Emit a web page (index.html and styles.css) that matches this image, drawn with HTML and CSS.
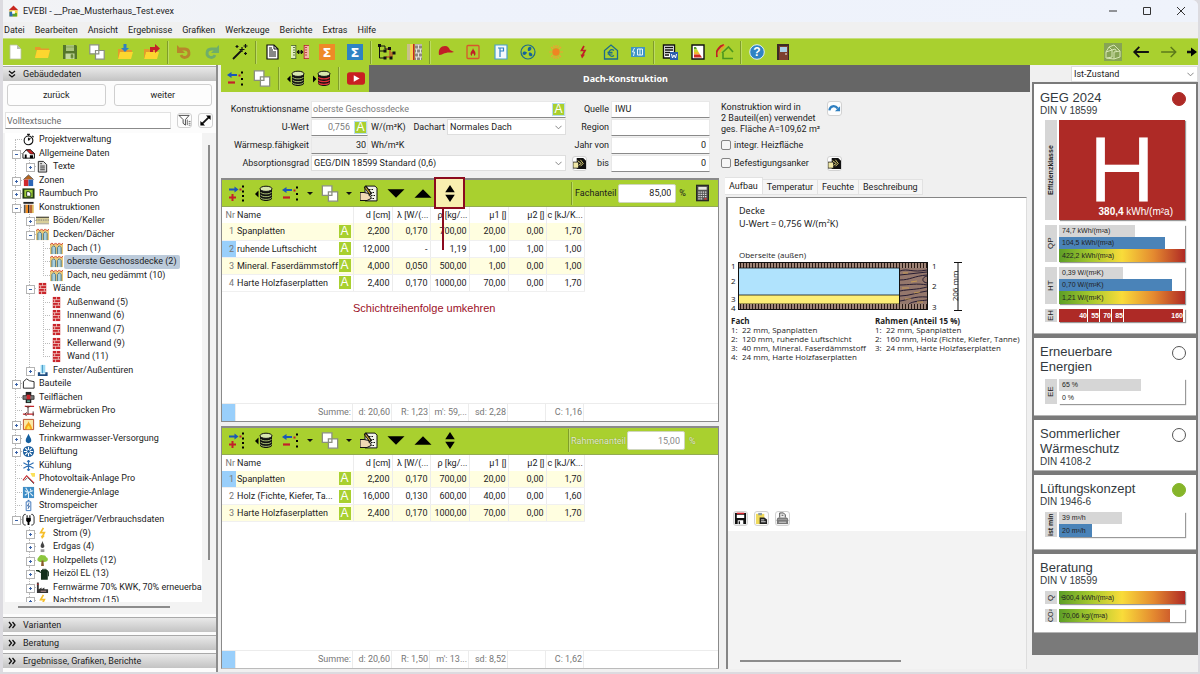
FILE: index.html
```html
<!DOCTYPE html>
<html lang="de">
<head>
<meta charset="utf-8">
<title>EVEBI - __Prae_Musterhaus_Test.evex</title>
<link rel="stylesheet" href="styles.css">
</head>
<body>
<svg class="sprite" aria-hidden="true">
  <defs>
    <pattern id="fibre" width="3" height="6" patternUnits="userSpaceOnUse"><rect width="3" height="6" fill="#a08679"/><path d="M.5 0v6" stroke="#2a1a14" stroke-width="1"/></pattern>
  </defs>
  <symbol id="app" viewBox="0 0 16 16"><path d="M1 7 8 0l7 7z" fill="#c8281e"/><path d="M2 7h12v9H2z" fill="#f3d33c"/><path d="M2 9h5v7H2z" fill="#2d6db0"/><path d="M7 11h6v5H7z" fill="#58a32c"/><path d="M6 8h4v4H6z" fill="#fff"/></symbol>
  <symbol id="new" viewBox="0 0 16 16"><path d="M3 1h7l4 4v10H3z" fill="#fff" stroke="#b9c2a4" stroke-width=".8"/><path d="M10 1v4h4z" fill="#b8bdb0"/></symbol>
  <symbol id="open" viewBox="0 0 16 16"><path d="M1 3h5l1 1.500h8V6H1z" fill="#e59a2c"/><path d="M1 3v10l2-7h13l-2 8H1z" fill="#f0a52f"/><path d="M3 6h13l-2 8H1z" fill="#fcd62f"/></symbol>
  <symbol id="save" viewBox="0 0 16 16"><path d="M1 1h13l1 1v13H1z" fill="#55762a"/><path d="M4 1h8v6H4z" fill="#a9c47a"/><path d="M3.500 9.500h9V15h-9z" fill="#c4d8a0"/><path d="M9 10.500h2V14H9zM4 3h8" fill="#55762a" stroke="#7f9c4c" stroke-width=".8"/></symbol>
  <symbol id="copy" viewBox="0 0 16 16"><path d="M.8.8h9v9h-9zM6.500 6.500h8.700v8.700H6.500z" fill="#fff" stroke="#8a8f80" stroke-width="1.200"/></symbol>
  <symbol id="import" viewBox="0 0 16 16"><path d="M1 5h5l1 1h8v2H1z" fill="#e59a2c"/><path d="M2 8h14l-2 7H1z" fill="#fcd62f"/><path d="M1 5v10l2-7z" fill="#e59a2c"/><path d="M6.500 0h3v4H12L8 8 4 4h2.500z" fill="#2f7fc0"/></symbol>
  <symbol id="export" viewBox="0 0 16 16"><path d="M0 5h5l1 1h7v2H0z" fill="#e59a2c"/><path d="M2 8h13l-2 7H0z" fill="#fcd62f"/><path d="M0 5v10l2-7z" fill="#e59a2c"/><path d="M6 8V3h5V0l5 4.500L11 9V6H9v2z" fill="#c4202a"/></symbol>
  <symbol id="undo" viewBox="0 0 16 16"><path d="M4 5h5a4.200 4.200 0 1 1-4 6" fill="none" stroke="#b8862b" stroke-width="2.800"/><path d="M1 1v8h8z" fill="#b8862b"/></symbol>
  <symbol id="redo" viewBox="0 0 16 16"><path d="M12 5H7a4.200 4.200 0 1 0 4 6" fill="none" stroke="#6fae6a" stroke-width="2.800"/><path d="M15 1v8H7z" fill="#6fae6a"/></symbol>
  <symbol id="wand" viewBox="0 0 16 16"><path d="M1 15 9.500 6.500" stroke="#111" stroke-width="1.800"/><path d="M10 3v5M7.500 5.500h5M5 1v3M3.500 2.500h3M13.500 0v4M11.500 2h4M13.500 8v3M12 9.500h3" stroke="#111" stroke-width="1.200"/></symbol>
  <symbol id="doc" viewBox="0 0 16 16"><path d="M3 1h7l4 4v10H3z" fill="#fff" stroke="#111" stroke-width="1.200"/><path d="M10 1v4h4M5 4h3M5 6h4M5 8h7M5 10h7M5 12h7" fill="none" stroke="#111"/></symbol>
  <symbol id="compare" viewBox="0 0 18 16"><path d="M0 1h5v14H0z" fill="#e4f0c0"/><path d="M0 1.500h5M0 14.500h5M2 3.500h2M2 6h2M2 8.500h2M2 11h2M4.800 1v14" stroke="#3f5a1c" stroke-width=".8"/><path d="M13 1h5v14h-5z" fill="#f2b9a5"/><path d="M13 1.500h5M13 14.500h5M14 3.500h2M14 6h2M14 8.500h2M14 11h2M13.200 1v14" stroke="#b0202a" stroke-width=".8"/><path d="M6 8h6M7.800 6 6 8l1.800 2zM10.200 6 12 8l-1.800 2z" stroke="#111" stroke-width=".9"/></symbol>
  <symbol id="network" viewBox="0 0 18 16"><path d="M1.500 2v12H6M1.500 7H6M3 2h4v3h4" fill="none" stroke="#111"/><path d="M9 5h3v7M8 13h6M14 8v5" fill="none" stroke="#c4202a"/><path d="M0 0h3v3H0zM5.500 5.500h3v3h-3zM10 3h3v3h-3zM5.500 12.500h3v3h-3zM14.500 7.500h3v3h-3zM11.500 12.500h3v3h-3z" fill="#111"/></symbol>
  <symbol id="layers" viewBox="0 0 16 16"><path d="M1 0h3v16H1z" fill="#c8c08c"/><path d="M4 0h3v16H4z" fill="#f6cf4e"/><path d="M7 0h1.500v16H7z" fill="#c4202a"/><path d="M9 0h7v16H9z" fill="#8d8780"/><path d="M9 1h7M9 5h7M9 9h7M9 13h7M12.500 1v4M10.500 5v4M14.500 5v4M12.500 9v4M10.500 13v3M14.500 13v3" stroke="#e6e2da"/></symbol>
  <symbol id="cap" viewBox="0 0 16 16"><path d="M1 11C0 5 3 2 7 2c3 0 4 2 5 4l4 2c-3 1-6 0-8 1-2 0-4 2-7 2z" fill="#c11f26"/></symbol>
  <symbol id="firebox" viewBox="0 0 16 16"><rect x="2" y="1.500" width="12" height="13" rx="1" fill="none" stroke="#d8562c" stroke-width="1.300"/><path d="M8 4c0 2 2.500 3 2.500 5.500A2.400 2.400 0 0 1 9 12c.5-1.500-.5-2-1-3-.5 1-1.500 1.500-1 3a2.400 2.400 0 0 1-1.500-2.500C5.500 7.500 8 6 8 4z" fill="#c11f26"/></symbol>
  <symbol id="pbox" viewBox="0 0 16 16"><path d="M2 1h12v14H2z" fill="#f4f9fc" stroke="#4aa0cf" stroke-width="1.200"/><path d="M7 13V4h3.500v3H7M5 4h2" fill="none" stroke="#2f83c3" stroke-width="1.200"/></symbol>
  <symbol id="fan" viewBox="0 0 16 16"><circle cx="8" cy="8" r="7" fill="none" stroke="#1d6a8c" stroke-width="1.200"/><path d="M8 7c-1-3 1-5 3-4 1 2 0 4-3 4zM7 8.500c-1 3-4 3-4.500 1C3 7 5 7 7 8.500zM9 8.500c3 0 4 2 3 3.500-2 1-4-.5-3-3.500z" fill="#14639c"/></symbol>
  <symbol id="sun" viewBox="0 0 16 16"><path d="M8 1v3M8 12v3M1 8h3M12 8h3M3 3l2 2M11 11l2 2M13 3l-2 2M3 13l2-2M5.500 1.500l.8 2M10.500 1.500l-.8 2M5.500 14.500l.8-2M10.500 14.500l-.8-2" stroke="#eea233" stroke-width="1.200"/><circle cx="8" cy="8" r="3.700" fill="#ef8422"/></symbol>
  <symbol id="bolt" viewBox="0 0 16 16"><path d="M9 2 6.500 6.500H10L7.500 11" fill="none" stroke="#c11f26" stroke-width="1.700"/><path d="M5.500 10.500h4.500L7 14.500z" fill="#c11f26"/></symbol>
  <symbol id="euro" viewBox="0 0 16 16"><path d="M1.500 15V6.500L8 1l6.500 5.500V15z" fill="none" stroke="#1d6a8c" stroke-width="1.300"/><path d="M11 6.500a3.200 3.200 0 1 0 0 5M4.500 8.300h5M4.500 10h5" fill="none" stroke="#1d6a8c" stroke-width="1.200"/></symbol>
  <symbol id="radiator" viewBox="0 0 16 16"><path d="M1 3h14v10H1z" fill="#3e93c4"/><path d="M4.500 4 2.500 8h2l-1 4M7.500 5v6M10 5v6M12.500 5v6M7.500 5h5M7.500 11h5" fill="none" stroke="#eaf7fb" stroke-width="1"/></symbol>
  <symbol id="report" viewBox="0 0 16 16"><path d="M1.500 1h11v13h-11z" fill="#fff" stroke="#111" stroke-width="1.400"/><path d="M3 3.500h8M3 6h8M3 8.500h5M3 11h4" stroke="#111" stroke-width="1.300"/><path d="M8 8h8v8H8z" fill="#2d5fae"/><path d="m9.500 10 1 4 1.500-3 1.500 3 1-4" fill="none" stroke="#fff"/></symbol>
  <symbol id="cert" viewBox="0 0 16 16"><path d="M2 1h12v14H2z" fill="#fff" stroke="#111" stroke-width="1.400"/><path d="M4 3h2l1 2.300H4z" fill="#58a32c"/><path d="M4 5.300h3L8.500 8H4z" fill="#c9d92b"/><path d="M4 8h4.500l1.500 2.500H4z" fill="#f3b52f"/><path d="M4 10.500h6l2 3H4z" fill="#cf2a22"/></symbol>
  <symbol id="houses" viewBox="0 0 18 16"><path d="M1 13C-.5 8 1 6 5 2l3-1" fill="none" stroke="#c11f26" stroke-width="2"/><path d="M3 10c1-4 3-6 6-9" fill="none" stroke="#f09a25" stroke-width="1.500"/><path d="M17 8 12.500 3 6 9M7 9v5.500h10" fill="none" stroke="#4c961e" stroke-width="1.600"/></symbol>
  <symbol id="door" viewBox="0 0 16 16"><path d="M2 0h12v16H2z" fill="#3c2a26"/><path d="M4 2h9v14H4z" fill="#7c3f30"/><path d="M5 3h7v5H5z" fill="#a9cfe8"/><path d="M10 10h2" stroke="#eee"/></symbol>
  <symbol id="model" viewBox="0 0 18 18"><path d="M0 0h18v18H0z" fill="#87a455"/><path d="M2 15V9l3-5 5-2 6 6v6l-6 2zM2 9l6-2 3-1 2 3M8 7v7M10 9l6-1M10 9v7M3 15l5-1M5 4l3 3" fill="none" stroke="#d7e6b4"/></symbol>
  <symbol id="back" viewBox="0 0 16 16"><path d="M15 8H2M6.500 3.500 2 8l4.500 4.500" fill="none" stroke="#111" stroke-width="1.600"/></symbol>
  <symbol id="fwd" viewBox="0 0 16 16"><path d="M1 8h13M9.500 3.500 14 8l-4.500 4.500" fill="none" stroke="#5c7a1b" stroke-width="1.300"/></symbol>
  <symbol id="last" viewBox="0 0 10 16"><path d="M0 8h6" stroke="#111" stroke-width="2.400"/><path d="M4 3.500 10 8l-6 4.500z"/></symbol>
  <symbol id="del-row" viewBox="0 0 18 16"><path d="M3 4.500h7" stroke="#1b57b8" stroke-width="2"/><path d="M0 4.500 4.500 1.500v6z" fill="#1b57b8"/><path d="M1 12h7" stroke="#c4202a" stroke-width="2.200"/><path d="M14 1h2v2h-2zM14 7.500h2v2h-2zM14 13h2v2h-2z"/><path d="M11.500 4h2v2h-2z" fill="#c4202a"/></symbol>
  <symbol id="add-row" viewBox="0 0 18 16"><path d="M1 4h6" stroke="#1b57b8" stroke-width="2"/><path d="M10.500 4 6.500 1v6z" fill="#1b57b8"/><path d="M1 12h7M4.500 8.500v7" stroke="#c4202a" stroke-width="2"/><path d="M14 0h2v2h-2zM14 5h2v2h-2zM14 9.500h2v2h-2zM14 14h2v2h-2z"/><path d="M11.500 3h2v2h-2z" fill="#c4202a"/></symbol>
  <symbol id="db" viewBox="0 0 18 16"><path d="M5 3.500v9c0 4 12 4 12 0v-9z" fill="#111"/><ellipse cx="11" cy="3.300" rx="6" ry="2.600" fill="#d8e6b0" stroke="#111"/><path d="M5.500 6.500c1 2.500 10 2.500 11 0M5.500 9.300c1 2.500 10 2.500 11 0M5.500 12c1 2.500 10 2.500 11 0" fill="none" stroke="#b8cf7c" stroke-width=".9"/><path d="M0 8.500 3.500 5v7z"/></symbol>
  <symbol id="db-red" viewBox="0 0 18 16"><path d="M5 3.500v9c0 4 12 4 12 0v-9z" fill="#111"/><ellipse cx="11" cy="3.300" rx="6" ry="2.600" fill="#d8e6b0" stroke="#111"/><path d="M5.500 6.500c1 2.500 10 2.500 11 0M5.500 9.300c1 2.500 10 2.500 11 0M5.500 12c1 2.500 10 2.500 11 0" fill="none" stroke="#e03038" stroke-width="1.300"/><path d="M3.500 8.500 0 5v7z"/></symbol>
  <symbol id="video" viewBox="0 0 20 16"><rect y="1" width="20" height="14" rx="3" fill="#c91f22"/><path d="m7.500 4.500 6.500 3.500-6.500 3.500z" fill="#fff"/></symbol>
  <symbol id="edit" viewBox="0 0 18 16"><path d="M5 .6h10l2 2v12.800H5z" fill="#f3f3ea" stroke="#111"/><path d="M9 4h5M10 7h5M11 10h4M10 13h5" stroke="#111" stroke-dasharray="1.500 1"/><path d="M0 7h4l5 1v2l2 1v2l-4 2H0z" fill="#f0d9b4" stroke="#111"/><path d="m5 1 6 8" stroke="#111" stroke-width="3"/><path d="m5.500 2 4.500 6" stroke="#e0b33a" stroke-width="1.100"/></symbol>
  <symbol id="down" viewBox="0 0 16 16"><path d="M0 4h16l-8 8z"/></symbol>
  <symbol id="up" viewBox="0 0 16 16"><path d="M0 12h16L8 4z"/></symbol>
  <symbol id="updown" viewBox="0 0 16 16"><path d="M3.500 6.800h9L8 0zM3.500 9.200h9L8 16z"/></symbol>
  <symbol id="calc" viewBox="0 0 14 18"><rect x=".7" y=".7" width="12.600" height="16.600" fill="#555" stroke="#222" stroke-width="1.300"/><path d="M2.500 2.500h9v3h-9z" fill="#e6e6e0"/><path d="M2.500 8h9M2.500 10.500h9M2.500 13h9M2.500 15.300h5" stroke="#ddd" stroke-width="1.400" stroke-dasharray="1.500 .9"/><path d="M9 15.300h2.500" stroke="#e33" stroke-width="1.400"/></symbol>
  <symbol id="pick" viewBox="0 0 14 14"><path d="M2 1h9l3 3v9H4V1z" fill="#111"/><path d="M0 5.500h6V12H0z" fill="#efe7a6" stroke="#111" stroke-width=".8"/><path d="M5 4l4 3-3 2M8 3l3 4-3 3" fill="none" stroke="#e9dc7c"/></symbol>
  <symbol id="jump" viewBox="0 0 14 14"><path d="M1.500 9C2 4 7.500 3 10.500 7" fill="none" stroke="#2f7fc0" stroke-width="2.400"/><path d="M13 4.500V10H7.500z" fill="#2f7fc0"/></symbol>
  <symbol id="filter" viewBox="0 0 14 14"><path d="M1 1.500h11L8 6v6L5.500 10V6z" fill="#fff" stroke="#444"/><path d="M10 6v6M11.500 8h2M11.500 10h2M11.500 12h2" stroke="#555" stroke-width=".9"/></symbol>
  <symbol id="expand" viewBox="0 0 14 14"><path d="m3 11 8-8" stroke="#111" stroke-width="2"/><path d="M7.500 1.500h5v5zM1.500 7.500v5h5z"/></symbol>
  <symbol id="floppy" viewBox="0 0 14 14"><path d="M1 1h12v12H1z" fill="#111"/><path d="M3 3h8v3.500H3zM4 9h6v4H4z" fill="#fff"/><path d="M3 1.500h8" stroke="#d9232b" stroke-width="1.500"/><path d="M5 10h1.500v3H5z" fill="#111"/></symbol>
  <symbol id="paste" viewBox="0 0 14 14"><path d="M1 2h9v11H1z" fill="#efd95a"/><path d="M3.500 1h4v2.500h-4z" fill="#8a9aa0"/><path d="M5 6h5l3 2v5H5z" fill="#222"/><path d="M6.500 8.500H10M6.500 10.500h5" stroke="#fff" stroke-width=".9"/></symbol>
  <symbol id="print" viewBox="0 0 14 14"><path d="M4 6V1h4l2 2v3" fill="#eee" stroke="#444"/><path d="M6 3.500h2" stroke="#444"/><path d="M2 6.500h10l1 3H1z" fill="#999" stroke="#555" stroke-width=".8"/><path d="M1 9h12v4H1z" fill="#777"/><path d="M3 11h8" stroke="#ddd"/></symbol>
  <symbol id="t-watch" viewBox="0 0 14 14"><circle cx="7" cy="8" r="4.700" fill="none" stroke="#111" stroke-width="1.200"/><path d="M7 8 9 5.500M7 8V5M5.500 1.500h3M7 1.500V3M11 3l1.500 1.500" stroke="#111" stroke-width="1.200"/></symbol>
  <symbol id="t-house" viewBox="0 0 14 14"><path d="M1 12V7l3.500-4H9l4.500 4v5z" fill="#fff" stroke="#111"/><path d="M4.500 3H9l4.500 4.500H9z" fill="#c22" stroke="#111" stroke-width=".7"/><path d="M3 8h2v4H3zM8.500 9H12v3H8.500z"/></symbol>
  <symbol id="t-doc" viewBox="0 0 14 14"><path d="M2.500 1.500H8L11.500 5v8h-9z" fill="#ddd" stroke="#222"/><path d="M4.500 4h2M4.500 6.500h5M4.500 8.500h5M4.500 10.500h5" stroke="#222" stroke-width=".9"/></symbol>
  <symbol id="t-zone" viewBox="0 0 14 14"><path d="M2 6 7 1l5 5z" fill="#b5651d"/><path d="M2 6h5v7H2z" fill="#d0282c"/><path d="M7 6h5v7H7z" fill="#2b66b8"/><path d="m1.500 6 5.500-5 5.500 5" fill="none" stroke="#333" stroke-width=".8"/></symbol>
  <symbol id="t-room" viewBox="0 0 14 14"><path d="M.5 1.500h13v11H.500z" fill="#1d3413"/><path d="M2.500 3h9v8h-9z" fill="#9fcf3a"/><path d="M5 5h2.500l2 1.500V10H5z" fill="#fff" stroke="#1d3413"/></symbol>
  <symbol id="t-con" viewBox="0 0 14 14"><path d="M1.500 1h11v2h-11z" fill="#222"/><path d="M2 4h2v9H2z" fill="#555"/><path d="M4 4h2.500v9H4z" fill="#ef8b1d"/><path d="M6.500 4H8v9H6.500z" fill="#222"/><path d="M8 4h3v9H8z" fill="#b9683a"/><path d="M11 4h1.500v9H11z" fill="#d9b03a"/></symbol>
  <symbol id="t-floor" viewBox="0 0 14 14"><path d="M0 3h14v8H0z" fill="#d9cf9a"/><path d="M0 3.500h14" stroke="#222"/><path d="M0 6.500h14" stroke="#777" stroke-dasharray="1.500 1"/><path d="M0 10.500h14" stroke="#aaa"/></symbol>
  <symbol id="t-roof" viewBox="0 0 14 14"><path d="M0 2h14v11H0z" fill="#e9c878"/><path d="M2 13V6l2-2 2 2v7M8 13V6l2-2 2 2v7" fill="#a9cfdc" stroke="#4e7784"/><path d="m0 3 2-2 2 2 2-2 2 2 2-2 2 2 2-2" fill="none" stroke="#d23a2a"/></symbol>
  <symbol id="t-wall" viewBox="0 0 14 14"><path d="M3 1h8v12H3z" fill="#c9252b"/><path d="M3 4h8M3 7h8M3 10h8M7 1v3M5 4v3M9 7v3M6 10v3" stroke="#f4d6d0" stroke-width=".8"/></symbol>
  <symbol id="t-window" viewBox="0 0 14 14"><path d="M5 1h5v9H5z" fill="#9fdcf3"/><path d="M7 1v9" stroke="#4b97c8"/><path d="M2 9h2.500v2H10V9h2.500v4H2z" fill="#1d4c80"/></symbol>
  <symbol id="t-part" viewBox="0 0 14 14"><path d="M1.500 12V5L5 2l3 2 5 1v7z" fill="#fff" stroke="#222"/></symbol>
  <symbol id="t-area" viewBox="0 0 14 14"><path d="M4 1h6v12H4z" fill="#222"/><path d="M1 5h12v4H1z" fill="#777" stroke="#222" stroke-width=".8"/><path d="M5 4h4v5H5z" fill="#c9252b"/><path d="M5.500 10h3v2h-3z" fill="#6a9"/></symbol>
  <symbol id="t-bridge" viewBox="0 0 14 14"><path d="M3 2.500h10M1 11h12" stroke="#c9252b" stroke-width="1.300"/><path d="M6.500 2v9M4 2l2 2M9 2 7 4M3 11l2-2M3 11l2 2M12 8v5" fill="none" stroke="#4a2a2a"/></symbol>
  <symbol id="t-heat" viewBox="0 0 14 14"><path d="M1.500 1.500h11v11h-11z" fill="#fbe9a8" stroke="#b5492a"/><path d="M7 3c0 2.500 3.500 4 4 9H3c.5-5 4-6 4-9z" fill="#f6a91c"/><path d="M7 8c1 1 2 2.500 2 4H5c0-1.500 1-3 2-4z" fill="#fde14a"/></symbol>
  <symbol id="t-drop" viewBox="0 0 14 14"><path d="M7 2c1 3 3 4.500 3 7a3 3 0 0 1-6 0c0-2.500 2-4 3-7z" fill="#155f9f"/></symbol>
  <symbol id="t-fan" viewBox="0 0 14 14"><circle cx="7" cy="7" r="6" fill="#1b5e9e"/><path d="M7 2v10M2 7h10M3.500 3.500l7 7M10.500 3.500l-7 7" stroke="#fff" stroke-width="1.200"/><circle cx="7" cy="7" r="1.500" fill="#1b5e9e"/></symbol>
  <symbol id="t-cool" viewBox="0 0 14 14"><path d="M7 1v12M1.500 4l11 6M12.500 4l-11 6M5.500 2 7 3.500 8.500 2M5.500 12 7 10.500 8.500 12" fill="none" stroke="#2e6fb4" stroke-width="1.200"/></symbol>
  <symbol id="t-pv" viewBox="0 0 14 14"><path d="m1 9 4-5 8 8" fill="none" stroke="#c9252b" stroke-width="1.200"/><path d="m3 9 3-3 7 7" fill="none" stroke="#666"/><path d="M9 1h5v4h-3z" fill="#fbe05a"/></symbol>
  <symbol id="t-wind" viewBox="0 0 14 14"><path d="M1 1h12v12H1z" fill="#3e8dc6"/><path d="M7 7 4 2M7 7l5-2M7 7v6M3 5l3 2M9 3l1 3M3 10l3-2M9 8l3 3" stroke="#e8f5fc" stroke-width="1.100"/></symbol>
  <symbol id="t-batt" viewBox="0 0 14 14"><path d="M4.500 3h5v9.500h-5z" fill="#fff" stroke="#3973b8"/><path d="M6 1.500h2" stroke="#3973b8" stroke-width="1.200"/><path d="M7.500 4.500 6 7.500h2l-1.500 3" fill="none" stroke="#1b4f94"/></symbol>
  <symbol id="t-plug" viewBox="0 0 14 14"><path d="M4 1.500H2.500L1 4v7l1.500 2H4M10 1.500h1.500L13 4v7l-1.500 2H10" fill="none" stroke="#222"/><path d="M4.500 5h5v3.500L8 10v3H6v-3L4.500 8.500z"/><path d="M5.500 2.500V5M8.500 2.500V5" stroke="#111" stroke-width="1.200"/></symbol>
  <symbol id="t-bolt" viewBox="0 0 14 14"><path d="M8 1 5 6h4l-2 4" fill="none" stroke="#f5be2a" stroke-width="1.800"/><path d="M5 9.500h4.500L6.500 13z" fill="#f5be2a"/></symbol>
  <symbol id="t-gas" viewBox="0 0 14 14"><path d="M7 1c-.5 2.500-2 3.500-2 5.500 0 1.500 1 2 2 2s2-.5 2-2S7.500 3.500 7 1z" fill="#444"/><path d="M5 10h4v3H5z" fill="#999"/></symbol>
  <symbol id="t-tree" viewBox="0 0 14 14"><path d="M1.500 6c0-2 1.500-2 2-3.500 1-1.500 3-1.500 4-1 2-.5 3 .5 3.500 2 2 .5 2 2.500 1.500 3.500-1 2-8.500 2-9.500 1-1-.3-1.500-1-1.500-2z" fill="#8cc63e"/><path d="M6 7h2l.5 6h-3z" fill="#8a5a2a"/></symbol>
  <symbol id="t-oil" viewBox="0 0 14 14"><path d="M0 4h3l2 2M6 4h6v9H6z" fill="#14301c" stroke="#14301c" stroke-width="1.300"/><path d="M7 4V2.500h4V4M12 5h1.500v5" fill="none" stroke="#14301c"/></symbol>
  <symbol id="t-plant" viewBox="0 0 14 14"><path d="M1 13V1.500h2V9l3-2v2l3-2v2h4v4z" fill="#333"/><path d="M1 3.500h2" stroke="#c9252b"/><path d="M5 11h6" stroke="#c9a0a0"/></symbol>
</svg>

<div class="app">
  <header class="titlebar">
    <svg class="ico-title"><use href="#app"/></svg>
    <span class="title">EVEBI - __Prae_Musterhaus_Test.evex</span>
    <button class="win" aria-label="Minimieren"><svg viewBox="0 0 10 10"><path d="M1 5h8"/></svg></button>
    <button class="win" aria-label="Maximieren"><svg viewBox="0 0 10 10"><path d="M1.500 1.500h7v7h-7z"/></svg></button>
    <button class="win" aria-label="Schließen"><svg viewBox="0 0 10 10"><path d="m1 1 8 8M9 1 1 9"/></svg></button>
  </header>

  <nav class="menu">
    <a href="#">Datei</a><a href="#">Bearbeiten</a><a href="#">Ansicht</a><a href="#">Ergebnisse</a><a href="#">Grafiken</a><a href="#">Werkzeuge</a><a href="#">Berichte</a><a href="#">Extras</a><a href="#">Hilfe</a>
  </nav>

  <div class="toolbar">
    <div class="group g-file">
      <button aria-label="Neu"><svg><use href="#new"/></svg></button>
      <button aria-label="Öffnen"><svg><use href="#open"/></svg></button>
      <button aria-label="Speichern"><svg><use href="#save"/></svg></button>
      <button aria-label="Kopieren"><svg><use href="#copy"/></svg></button>
      <button aria-label="Import"><svg><use href="#import"/></svg></button>
      <button aria-label="Export"><svg><use href="#export"/></svg></button>
    </div>
    <i class="sep"></i>
    <div class="group g-edit">
      <button aria-label="Rückgängig"><svg><use href="#undo"/></svg></button>
      <button aria-label="Wiederholen"><svg><use href="#redo"/></svg></button>
      <button aria-label="Assistent"><svg><use href="#wand"/></svg></button>
    </div>
    <i class="sep"></i>
    <div class="group g-calc">
      <button aria-label="Protokoll"><svg><use href="#doc"/></svg></button>
      <button aria-label="Vergleich"><svg class="wideico"><use href="#compare"/></svg></button>
      <button aria-label="Summe orange"><svg viewBox="0 0 16 16"><path d="M0 0h16v16H0z" fill="#ee8a27"/><text x="8" y="13" text-anchor="middle" class="glyph-sum">Σ</text></svg></button>
      <button aria-label="Summe blau"><svg viewBox="0 0 16 16"><path d="M0 0h16v16H0z" fill="#2f83c3"/><text x="8" y="13" text-anchor="middle" class="glyph-sum">Σ</text></svg></button>
    </div>
    <i class="sep"></i>
    <div class="group g-struct">
      <button aria-label="Struktur"><svg class="wideico"><use href="#network"/></svg></button>
      <button aria-label="Schichten"><svg><use href="#layers"/></svg></button>
    </div>
    <i class="sep"></i>
    <div class="group g-plant">
      <button aria-label="Assistent Bau"><svg><use href="#cap"/></svg></button>
      <button aria-label="Heizung"><svg><use href="#firebox"/></svg></button>
      <button aria-label="Wasser"><svg><use href="#pbox"/></svg></button>
      <button aria-label="Lüftung"><svg><use href="#fan"/></svg></button>
      <button aria-label="Solar"><svg><use href="#sun"/></svg></button>
      <button aria-label="Strom"><svg><use href="#bolt"/></svg></button>
      <button aria-label="Kosten"><svg><use href="#euro"/></svg></button>
      <button aria-label="Heizlast"><svg><use href="#radiator"/></svg></button>
    </div>
    <i class="sep"></i>
    <div class="group g-report">
      <button aria-label="Bericht"><svg><use href="#report"/></svg></button>
      <button aria-label="Ausweis"><svg><use href="#cert"/></svg></button>
      <button aria-label="Sanierungsfahrplan"><svg class="wideico"><use href="#houses"/></svg></button>
    </div>
    <i class="sep"></i>
    <div class="group g-help">
      <button aria-label="Hilfe"><svg viewBox="0 0 16 16"><circle cx="8" cy="8" r="7.300" fill="#2f83c3" stroke="#dfeef6"/><text x="8" y="12" text-anchor="middle" class="glyph-help">?</text></svg></button>
      <button aria-label="Beenden"><svg><use href="#door"/></svg></button>
    </div>
    <div class="group g-nav">
      <button aria-label="3D-Modell"><svg><use href="#model"/></svg></button>
      <button aria-label="Zurück"><svg><use href="#back"/></svg></button>
      <button aria-label="Vor"><svg><use href="#fwd"/></svg></button>
      <button class="narrow" aria-label="Letzte"><svg><use href="#last"/></svg></button>
    </div>
  </div>

  <div class="workspace">
    <aside class="sidebar">
      <button class="fold open"><svg viewBox="0 0 8 8"><path d="m1 1 3 2.500L7 1M1 4.500 4 7l3-2.500"/></svg>Gebäudedaten</button>
      <div class="steps"><button>zurück</button><button>weiter</button></div>
      <div class="search">
        <input type="text" placeholder="Volltextsuche" aria-label="Volltextsuche">
        <button class="mini" aria-label="Filter"><svg><use href="#filter"/></svg></button>
        <button class="mini" aria-label="Erweitern"><svg><use href="#expand"/></svg></button>
      </div>
      <div class="tree-pane">
        <div class="tree-view">
          <ul class="tree">
            <li><i class="g h top"></i><svg><use href="#t-watch"/></svg>Projektverwaltung</li>
            <li><i class="g h m"></i><svg><use href="#t-house"/></svg>Allgemeine Daten</li>
            <li><i class="g"></i><i class="g h p end"></i><svg><use href="#t-doc"/></svg>Texte</li>
            <li><i class="g h p"></i><svg><use href="#t-zone"/></svg>Zonen</li>
            <li><i class="g h p"></i><svg><use href="#t-room"/></svg>Raumbuch Pro</li>
            <li><i class="g h m"></i><svg><use href="#t-con"/></svg>Konstruktionen</li>
            <li><i class="g"></i><i class="g h p"></i><svg><use href="#t-floor"/></svg>Böden/Keller</li>
            <li><i class="g"></i><i class="g h m"></i><svg><use href="#t-roof"/></svg>Decken/Dächer</li>
            <li><i class="g"></i><i class="g"></i><i class="g h"></i><svg><use href="#t-roof"/></svg>Dach (1)</li>
            <li><i class="g"></i><i class="g"></i><i class="g h"></i><svg><use href="#t-roof"/></svg><span class="sel">oberste Geschossdecke (2)</span></li>
            <li><i class="g"></i><i class="g"></i><i class="g h end"></i><svg><use href="#t-roof"/></svg>Dach, neu gedämmt (10)</li>
            <li><i class="g"></i><i class="g h m"></i><svg><use href="#t-wall"/></svg>Wände</li>
            <li><i class="g"></i><i class="g"></i><i class="g h"></i><svg><use href="#t-wall"/></svg>Außenwand (5)</li>
            <li><i class="g"></i><i class="g"></i><i class="g h"></i><svg><use href="#t-wall"/></svg>Innenwand (6)</li>
            <li><i class="g"></i><i class="g"></i><i class="g h"></i><svg><use href="#t-wall"/></svg>Innenwand (7)</li>
            <li><i class="g"></i><i class="g"></i><i class="g h"></i><svg><use href="#t-wall"/></svg>Kellerwand (9)</li>
            <li><i class="g"></i><i class="g"></i><i class="g h end"></i><svg><use href="#t-wall"/></svg>Wand (11)</li>
            <li><i class="g"></i><i class="g h p end"></i><svg><use href="#t-window"/></svg>Fenster/Außentüren</li>
            <li><i class="g h p"></i><svg><use href="#t-part"/></svg>Bauteile</li>
            <li><i class="g h"></i><svg><use href="#t-area"/></svg>Teilflächen</li>
            <li><i class="g h"></i><svg><use href="#t-bridge"/></svg>Wärmebrücken Pro</li>
            <li><i class="g h p"></i><svg><use href="#t-heat"/></svg>Beheizung</li>
            <li><i class="g h p"></i><svg><use href="#t-drop"/></svg>Trinkwarmwasser-Versorgung</li>
            <li><i class="g h p"></i><svg><use href="#t-fan"/></svg>Belüftung</li>
            <li><i class="g h"></i><svg><use href="#t-cool"/></svg>Kühlung</li>
            <li><i class="g h"></i><svg><use href="#t-pv"/></svg>Photovoltaik-Anlage Pro</li>
            <li><i class="g h"></i><svg><use href="#t-wind"/></svg>Windenergie-Anlage</li>
            <li><i class="g h"></i><svg><use href="#t-batt"/></svg>Stromspeicher</li>
            <li><i class="g h m end"></i><svg><use href="#t-plug"/></svg>Energieträger/Verbrauchsdaten</li>
            <li><i></i><i class="g h p"></i><svg><use href="#t-bolt"/></svg>Strom (9)</li>
            <li><i></i><i class="g h p"></i><svg><use href="#t-gas"/></svg>Erdgas (4)</li>
            <li><i></i><i class="g h p"></i><svg><use href="#t-tree"/></svg>Holzpellets (12)</li>
            <li><i></i><i class="g h p"></i><svg><use href="#t-oil"/></svg>Heizöl EL (13)</li>
            <li><i></i><i class="g h p"></i><svg><use href="#t-plant"/></svg>Fernwärme 70% KWK, 70% erneuerba</li>
            <li><i></i><i class="g h p"></i><svg><use href="#t-bolt"/></svg>Nachtstrom (15)</li>
          </ul>
        </div>
        <div class="vbar"></div>
        <div class="hbar"></div>
      </div>
      <button class="fold"><svg viewBox="0 0 8 8"><path d="m1 1 2.500 3L1 7M4.500 1 7 4 4.500 7"/></svg>Varianten</button>
      <button class="fold"><svg viewBox="0 0 8 8"><path d="m1 1 2.500 3L1 7M4.500 1 7 4 4.500 7"/></svg>Beratung</button>
      <button class="fold"><svg viewBox="0 0 8 8"><path d="m1 1 2.500 3L1 7M4.500 1 7 4 4.500 7"/></svg>Ergebnisse, Grafiken, Berichte</button>
    </aside>

    <main class="main">
      <div class="mainhead">
        <div class="headtools">
          <button aria-label="Löschen"><svg><use href="#del-row"/></svg></button>
          <button aria-label="Kopieren"><svg><use href="#copy"/></svg></button>
          <i class="sep"></i>
          <button aria-label="Aus Datenbank"><svg><use href="#db"/></svg></button>
          <button aria-label="In Datenbank"><svg><use href="#db-red"/></svg></button>
          <i class="sep"></i>
          <button aria-label="Video"><svg><use href="#video"/></svg></button>
        </div>
        <h1>Dach-Konstruktion</h1>
      </div>

      <form class="form">
        <div class="f-left">
          <label for="kname">Konstruktionsname</label>
          <div class="field wide"><input id="kname" type="text" value="oberste Geschossdecke"><b class="auto">A</b></div>
          <label for="uwert">U-Wert</label>
          <div class="field"><input id="uwert" class="num" type="text" value="0,756"><b class="auto">A</b></div>
          <span class="unit">W/(m²K)</span>
          <div class="roof"><label for="dachart">Dachart</label><select id="dachart"><option>Normales Dach</option></select></div>
          <label for="wsp">Wärmesp.fähigkeit</label>
          <div class="field off"><input id="wsp" class="num" type="text" value="30" readonly></div>
          <span class="unit">Wh/m²K</span><span></span>
          <label for="absorb">Absorptionsgrad</label>
          <select id="absorb" class="wide"><option>GEG/DIN 18599 Standard (0,6)</option></select>
        </div>
        <div class="f-mid">
          <span></span><label for="quelle">Quelle</label><div class="field"><input id="quelle" type="text" value="IWU"></div>
          <span></span><label for="region">Region</label><div class="field"><input id="region" type="text"></div>
          <label class="two" for="jahr">Jahr von</label><div class="field"><input id="jahr" class="num" type="text" value="0"></div>
          <button class="mini" type="button" aria-label="Auswählen"><svg><use href="#pick"/></svg></button><label for="bis">bis</label><div class="field"><input id="bis" class="num" type="text" value="0"></div>
        </div>
        <div class="f-right">
          <p>Konstruktion wird in<br>2 Bauteil(en) verwendet<br>ges. Fläche A=109,62 m²</p>
          <button class="mini" type="button" aria-label="Gehe zu"><svg><use href="#jump"/></svg></button>
          <label class="check"><input type="checkbox">integr. Heizfläche</label><span></span>
          <label class="check"><input type="checkbox">Befestigungsanker</label>
          <button class="mini" type="button" aria-label="Anker wählen"><svg><use href="#pick"/></svg></button>
        </div>
      </form>

      <div class="split">
        <div class="panels">
          <section class="panel">
            <div class="ptools">
              <button aria-label="Schicht einfügen"><svg><use href="#add-row"/></svg></button>
              <button aria-label="Datenbank"><svg><use href="#db"/></svg></button>
              <button aria-label="Schicht löschen"><svg><use href="#del-row"/></svg></button>
              <button class="caret" aria-label="Mehr"></button>
              <button aria-label="Kopieren"><svg><use href="#copy"/></svg></button>
              <button class="caret" aria-label="Mehr"></button>
              <button aria-label="Bearbeiten"><svg><use href="#edit"/></svg></button>
              <button aria-label="Nach unten"><svg><use href="#down"/></svg></button>
              <button aria-label="Nach oben"><svg><use href="#up"/></svg></button>
              <button class="marked" aria-label="Reihenfolge umkehren"><svg><use href="#updown"/></svg></button>
              <div class="share"><i class="sep"></i><label for="fach">Fachanteil</label><input id="fach" type="text" value="85,00"><span>%</span><button aria-label="Rechner"><svg class="calc"><use href="#calc"/></svg></button></div>
            </div>
            <table>
              <colgroup><col class="c-nr"><col class="c-name"><col class="c-a"><col class="c-b"><col class="c-a"><col class="c-a"><col class="c-b"><col class="c-b"></colgroup>
              <thead><tr><th>Nr</th><th>Name</th><th>d [cm]</th><th>λ [W/(...</th><th>ρ [kg/...</th><th>μ1 []</th><th>μ2 []</th><th>c [kJ/K...</th></tr></thead>
              <tbody>
                <tr><td>1</td><td><div><span>Spanplatten</span><b class="auto">A</b></div></td><td>2,200</td><td>0,170</td><td>700,00</td><td>20,00</td><td>0,00</td><td>1,70</td></tr>
                <tr class="cur"><td>2</td><td><div><span>ruhende Luftschicht</span><b class="auto">A</b></div></td><td>12,000</td><td>-</td><td>1,19</td><td>1,00</td><td>1,00</td><td>1,00</td></tr>
                <tr><td>3</td><td><div><span>Mineral. Faserdämmstoff</span><b class="auto">A</b></div></td><td>4,000</td><td>0,050</td><td>500,00</td><td>1,00</td><td>0,00</td><td>1,00</td></tr>
                <tr><td>4</td><td><div><span>Harte Holzfaserplatten</span><b class="auto">A</b></div></td><td>2,400</td><td>0,170</td><td>1000,00</td><td>70,00</td><td>0,00</td><td>1,70</td></tr>
              </tbody>
            </table>
            <div class="sums"><span></span><span>Summe:</span><span>d: 20,60</span><span>R: 1,23</span><span>m': 59,...</span><span>sd: 2,28</span><span></span><span>C: 1,16</span></div>
            <div class="pointer"></div>
            <p class="note">Schichtreihenfolge umkehren</p>
          </section>

          <section class="panel">
            <div class="ptools">
              <button aria-label="Schicht einfügen"><svg><use href="#add-row"/></svg></button>
              <button aria-label="Datenbank"><svg><use href="#db"/></svg></button>
              <button aria-label="Schicht löschen"><svg><use href="#del-row"/></svg></button>
              <button class="caret" aria-label="Mehr"></button>
              <button aria-label="Kopieren"><svg><use href="#copy"/></svg></button>
              <button class="caret" aria-label="Mehr"></button>
              <button aria-label="Bearbeiten"><svg><use href="#edit"/></svg></button>
              <button aria-label="Nach unten"><svg><use href="#down"/></svg></button>
              <button aria-label="Nach oben"><svg><use href="#up"/></svg></button>
              <button aria-label="Reihenfolge umkehren"><svg><use href="#updown"/></svg></button>
              <div class="share dim"><i class="sep"></i><label for="rahmen">Rahmenanteil</label><input id="rahmen" type="text" value="15,00"><span>%</span></div>
            </div>
            <table>
              <colgroup><col class="c-nr"><col class="c-name"><col class="c-a"><col class="c-b"><col class="c-a"><col class="c-a"><col class="c-b"><col class="c-b"></colgroup>
              <thead><tr><th>Nr</th><th>Name</th><th>d [cm]</th><th>λ [W/(...</th><th>ρ [kg/...</th><th>μ1 []</th><th>μ2 []</th><th>c [kJ/K...</th></tr></thead>
              <tbody>
                <tr class="cur"><td>1</td><td><div><span>Spanplatten</span><b class="auto">A</b></div></td><td>2,200</td><td>0,170</td><td>700,00</td><td>20,00</td><td>0,00</td><td>1,70</td></tr>
                <tr><td>2</td><td><div><span>Holz (Fichte, Kiefer, Ta...</span><b class="auto">A</b></div></td><td>16,000</td><td>0,130</td><td>600,00</td><td>40,00</td><td>0,00</td><td>1,60</td></tr>
                <tr><td>3</td><td><div><span>Harte Holzfaserplatten</span><b class="auto">A</b></div></td><td>2,400</td><td>0,170</td><td>1000,00</td><td>70,00</td><td>0,00</td><td>1,70</td></tr>
              </tbody>
            </table>
            <div class="sums"><span></span><span>Summe:</span><span>d: 20,60</span><span>R: 1,50</span><span>m': 13...</span><span>sd: 8,52</span><span></span><span>C: 1,62</span></div>
          </section>
        </div>

        <section class="detail">
          <div class="tabs"><button class="on">Aufbau</button><button>Temperatur</button><button>Feuchte</button><button>Beschreibung</button></div>
          <div class="sheet">
            <div class="paper">
              <p class="desc">Decke<br>U-Wert = 0,756 W/(m²K)</p>
              <p class="side">Oberseite (außen)</p>
              <svg class="section" viewBox="0 0 240 52" role="img" aria-label="Schichtaufbau">
                <rect x="7" y="2" width="190" height="48" fill="#111"/>
                <rect x="8" y="3" width="188" height="5" fill="url(#fibre)"/>
                <rect x="8" y="8" width="160" height="27" fill="#b0e3fd"/>
                <rect x="8" y="35" width="160" height="9" fill="#fdee76"/>
                <path d="M8 35h160M8 44h160M8 8h160" stroke="#111" stroke-width=".8"/>
                <rect x="169" y="8" width="27" height="36" fill="#94776c"/>
                <path d="M169 11c8-3 12 2 27-1M169 15l27-3M169 20c10 0 14-4 27-5M169 25c8 0 18-2 27 0M169 31c10-2 16-1 27-4M169 36c9 0 19-4 27-5M169 41c8-1 14-5 27-4M178 44c4-3 12-3 18-4M196 16c-5 1-6 6 0 7" fill="none" stroke="#261d33"/>
                <path d="M172 13h5M180 22l6-1M171 28h7M183 33l6-1M174 39h6M186 42h6" stroke="#d3a64e" stroke-width=".8"/>
                <rect x="8" y="44" width="188" height="5" fill="url(#fibre)"/>
                <path d="M227 2.500v48M223 2.500h8M223 50.500h8" stroke="#111"/>
                <g class="marks"><text x="0" y="9">1</text><text x="0" y="24">2</text><text x="0" y="42">3</text><text x="0" y="51">4</text><text x="201" y="9">1</text><text x="201" y="29">2</text><text x="201" y="50">3</text><text transform="translate(227 26) rotate(-90)" text-anchor="middle">206 mm</text></g>
              </svg>
              <div class="legend">
                <div><h2>Fach</h2><ol><li>22 mm, Spanplatten</li><li>120 mm, ruhende Luftschicht</li><li>40 mm, Mineral. Faserdämmstoff</li><li>24 mm, Harte Holzfaserplatten</li></ol></div>
                <div><h2>Rahmen (Anteil 15 %)</h2><ol><li>22 mm, Spanplatten</li><li>160 mm, Holz (Fichte, Kiefer, Tanne)</li><li>24 mm, Harte Holzfaserplatten</li></ol></div>
              </div>
              <div class="actions">
                <button class="mini" aria-label="Speichern"><svg><use href="#floppy"/></svg></button>
                <button class="mini" aria-label="Einfügen"><svg><use href="#paste"/></svg></button>
                <button class="mini" aria-label="Drucken"><svg><use href="#print"/></svg></button>
              </div>
            </div>
            <div class="below"><div class="hscroll"></div></div>
          </div>
        </section>
      </div>
    </main>

    <aside class="results">
      <select aria-label="Variante"><option>Ist-Zustand</option></select>
      <div class="cards">
        <article class="card c1">
          <i class="dot red"></i><h3>GEG 2024</h3><p>DIN V 18599</p>
          <div class="meter klass"><span class="cap"><b>Effizienzklasse</b></span><div class="rating"><strong>H</strong><em><b>380,4</b> kWh/(m²a)</em></div></div>
          <div class="meter"><span class="cap">QP</span><div class="bars"><span class="grey" style="width:60%">74,7 kWh/(m²a)</span><span class="blue" style="width:84%">104,5 kWh/(m²a)</span><span class="grad">422,2 kWh/(m²a)</span></div></div>
          <div class="meter"><span class="cap">HT</span><div class="bars"><span class="grey" style="width:51%">0,39 W/(m²K)</span><span class="blue" style="width:90%">0,70 W/(m²K)</span><span class="grad">1,21 W/(m²K)</span></div></div>
          <div class="meter"><span class="cap">EH</span><div class="eh"><b>40</b><b>55</b><b>70</b><b>85</b><b>160</b></div></div>
        </article>
        <article class="card c2">
          <i class="dot"></i><h3>Erneuerbare Energien</h3>
          <div class="meter"><span class="cap">EE</span><div class="bars"><span class="grey" style="width:65%">65 %</span><span>0 %</span></div></div>
        </article>
        <article class="card c3"><i class="dot"></i><h3>Sommerlicher Wärmeschutz</h3><p>DIN 4108-2</p></article>
        <article class="card c4">
          <i class="dot green"></i><h3>Lüftungskonzept</h3><p>DIN 1946-6</p>
          <div class="meter"><span class="cap"><b>ist min</b></span><div class="bars"><span class="grey" style="width:50%">39 m³/h</span><span class="blue" style="width:26%">20 m³/h</span></div></div>
        </article>
        <article class="card c5">
          <h3>Beratung</h3><p>DIN V 18599</p>
          <div class="meter"><span class="cap">Q<sub>f</sub></span><div class="bars"><span class="grad">300,4 kWh/(m²a)</span></div></div>
          <div class="meter"><span class="cap small">CO²</span><div class="bars"><span class="grad part" style="width:88%">70,06 kg/(m²a)</span></div></div>
        </article>
      </div>
    </aside>
  </div>
</div>
</body>
</html>
```
FILE: styles.css
```css
* { box-sizing: border-box; }

body {
  margin: 0;
  height: 100vh;
  padding: 0 2px 2px 3px;
  background: #dcdbe0;
  font: 9px/12px Roboto, "Open Sans", sans-serif;
  color: #1c1c1c;
}

button, input, select { font: inherit; color: inherit; margin: 0; }
button { border: 0; padding: 0; background: none; }
h1, h2, h3, p, ul, ol { margin: 0; padding: 0; font-weight: 400; }
ul, ol { list-style: none; }
a { color: inherit; text-decoration: none; }
i { font-style: normal; }
svg { display: block; flex: none; }
.sprite { position: absolute; width: 0; height: 0; }

.glyph-sum { font: bold 13px "DejaVu Sans", sans-serif; fill: #fff; }
.glyph-help { font: bold 12px "Liberation Sans", sans-serif; fill: #fff; }

.app {
  display: flex;
  flex-direction: column;
  height: 100%;
  background: #f0f0f0;
  border-radius: 0 6px 0 0;
  overflow: hidden;
}

/* title bar and menu */
.titlebar {
  display: flex;
  align-items: center;
  height: 22px;
  padding-left: 5px;
  background: linear-gradient(90deg, #f2f3f5, #eef2fb 35%, #eff3fb);
}
.ico-title { width: 11px; height: 12px; }
.title { flex: 1; margin-left: 4px; }
.win { width: 34px; height: 22px; display: grid; place-items: center; }
.win svg { width: 10px; height: 10px; fill: none; stroke: #333; }
.menu { display: flex; gap: 10px; height: 16px; align-items: center; padding-left: 1px; }

/* main toolbar */
.toolbar {
  display: flex;
  align-items: center;
  height: 27px;
  background: #a9d02f;
  border-top: 1px solid #c6df7c;
}
.group { display: flex; justify-content: space-between; }
.toolbar button, .headtools button { width: 24px; height: 24px; display: grid; place-items: center; }
.toolbar svg { width: 16px; height: 16px; }
.toolbar .wideico { width: 18px; }
.sep { width: 2px; height: 23px; margin: 0 3px; border-left: 1px solid #7f9c2a; border-right: 1px solid #bcdb62; flex: none; }
.g-file { width: 161px; }
.g-edit { width: 80px; }
.g-calc { width: 107px; }
.g-struct { width: 51px; }
.g-plant { width: 216px; }
.g-report { width: 79px; }
.g-help { width: 50px; }
.g-nav { margin-left: auto; gap: 4px; }
.g-nav svg { width: 18px; height: 18px; }
.toolbar .g-nav .narrow { width: 13px; }
.toolbar .narrow svg { width: 10px; height: 16px; }

.workspace {
  flex: 1;
  min-height: 0;
  display: grid;
  grid-template-columns: 215px minmax(0, 1fr) 166px;
  column-gap: 2px;
}

/* sidebar */
.sidebar {
  display: flex;
  flex-direction: column;
  min-height: 0;
  background: #fcfcfc;
  border-right: 2px solid #8d8d8d;
}
.fold {
  display: flex;
  align-items: center;
  height: 15px;
  margin-top: 3px;
  padding-left: 5px;
  background: linear-gradient(#e9e9e9, #c3c3c3);
  border-top: 1px solid #a9a9a9;
  flex: none;
}
.fold.open { margin-top: 1px; }
.fold:last-child { margin-bottom: 4px; }
.fold svg { width: 8px; height: 8px; margin-right: 7px; fill: none; stroke: #111; stroke-width: 1.300; }
.steps { display: grid; grid-template-columns: 1fr 1fr; gap: 8px; padding: 3px 4px; }
.steps button { height: 22px; border: 1px solid #cfcfcf; border-radius: 3px; background: #fdfdfd; }
.search { display: flex; gap: 6px; padding: 3px 3px 4px 2px; align-items: center; }
.search input {
  flex: 1;
  min-width: 0;
  height: 17px;
  padding: 0 1px;
  border: 1px solid #e2e2e2;
  border-bottom-color: #8a8a8a;
  background: #fff;
}
.search input::placeholder { color: #6b6b6b; opacity: 1; }
.mini { width: 15px; height: 15px; display: grid; place-items: center; border: 1px solid #d2d2d2; border-radius: 3px; background: #fdfdfd; }
.mini svg { width: 13px; height: 13px; }

.tree-pane {
  flex: 1;
  min-height: 0;
  display: grid;
  grid-template: minmax(0, 1fr) 12px / minmax(0, 1fr) 14px;
  padding-left: 2px;
  background: #f3f3f3;
}
.tree-view { background: #fff; overflow: hidden; }
.tree { display: grid; grid-auto-rows: 1fr; height: calc(100% + 6px); padding-left: 3px; }
.tree li { display: flex; align-items: stretch; min-height: 13px; line-height: 13px; white-space: nowrap; }
.tree svg { width: 13px; height: 13px; margin-right: 4px; }
.tree i { position: relative; width: 14px; flex: none; }
.tree .g { background: repeating-linear-gradient(#bbb 0 1px, transparent 1px 2px) 7px 0 / 1px 100% no-repeat; }
.tree .g.end { background-size: 1px 50%; }
.tree .g.top { background-size: 1px 50%; background-position: 7px 100%; }
.tree .h::before { content: ""; position: absolute; left: 7px; right: 0; top: 6px; border-top: 1px dotted #bbb; }
.tree .p::after, .tree .m::after {
  content: "";
  position: absolute;
  left: 4px;
  top: 3px;
  width: 7px;
  height: 7px;
  border: 1px solid #b4b4b4;
  background: linear-gradient(#3a62a8, #3a62a8) center / 3px 1px no-repeat, linear-gradient(#3a62a8, #3a62a8) center / 1px 3px no-repeat, #fff;
}
.tree .m::after { background: linear-gradient(#3a62a8, #3a62a8) center / 3px 1px no-repeat, #fff; }
.sel { margin-left: -3px; padding: 0 3px; background: #bccbdb; border-radius: 2px; }
.vbar { width: 2px; margin: 12px 0 42px 6px; background: #8c8c8c; }
.hbar { height: 2px; margin: 4px 32px 0 13px; background: #8c8c8c; }

/* main head */
.main { display: flex; flex-direction: column; min-width: 0; min-height: 0; padding-left: 1px; }
.mainhead { display: grid; grid-template-columns: auto 1fr; background: #666; align-items: center; }
.headtools { grid-area: 1 / 1; display: flex; align-items: center; height: 27px; padding-left: 2px; background: #a9d02f; }
.headtools button { width: 26px; }
.headtools svg { width: 18px; height: 17px; }
.mainhead h1 { grid-area: 1 / 1 / 2 / 3; justify-self: center; color: #fff; font: bold 9px/12px "Noto Sans", sans-serif; }

/* form */
.form { display: grid; grid-template-columns: 345px 138px 1fr; gap: 6px; padding: 8px 0 6px; }
.form label { text-align: right; white-space: nowrap; }
.f-left { display: grid; grid-template-columns: 88px 57px 41px 1fr; grid-auto-rows: 18px; column-gap: 2px; align-items: center; }
.f-left .wide { grid-column: 2 / 5; }
.field { display: flex; align-items: center; height: 17px; background: #fff; border: 1px solid #e8e8e8; border-bottom-color: #8a8a8a; }
.field input { flex: 1; width: 0; min-width: 0; height: 15px; padding: 0 1px; border: 0; background: none; }
#kname, #uwert { color: #7b7b7b; }
.num { text-align: right; }
.off { background: #f0f0f0; }
.auto {
  flex: none;
  width: 13px;
  height: 13px;
  background: #a9d02f;
  color: #fff;
  font: 12px/13px "Liberation Sans", sans-serif;
  text-align: center;
}
.field .auto { margin-left: 3px; outline: 1px solid #b6dcef; outline-offset: -1px; }
.unit { padding-left: 1px; white-space: nowrap; }
.roof { display: grid; grid-template-columns: 32px 1fr; gap: 2px; align-items: center; }
select {
  appearance: none;
  width: 100%;
  height: 16px;
  padding: 0 2px;
  border: 1px solid #dedede;
  border-radius: 0;
  background: #fff url("data:image/svg+xml,%3Csvg xmlns='http://www.w3.org/2000/svg' viewBox='0 0 8 5'%3E%3Cpath d='m.5.5 3.500 3.500L7.500.5' fill='none' stroke='%23777'/%3E%3C/svg%3E") right 3px center / 7px 5px no-repeat;
}
.f-mid { display: grid; grid-template-columns: 15px 20px 99px; grid-auto-rows: 18px; column-gap: 2px; align-items: center; }
.f-mid label { justify-self: end; }
.f-mid .two { grid-column: 1 / 3; }
.f-mid .field input { padding: 0 3px; }
.f-right { display: grid; grid-template-columns: 100px 16px; grid-template-rows: 36px 18px 18px; column-gap: 6px; align-items: center; padding-left: 5px; line-height: 11px; }
.f-right p { white-space: nowrap; }
.f-right .mini { align-self: start; margin-top: 1px; }
.f-right .check + .mini { align-self: center; }
.form .check { display: flex; align-items: center; gap: 3px; }
.check input { appearance: none; width: 10px; height: 10px; border: 1px solid #858585; border-radius: 2px; background: #f6f6f6; }

/* layer tables */
.split { flex: 1; min-height: 0; display: grid; grid-template-columns: 498px minmax(0, 1fr); column-gap: 4px; }
.panels { display: grid; grid-template-rows: 1fr 1fr; gap: 4px; min-height: 0; padding-bottom: 3px; }
.panel {
  position: relative;
  display: flex;
  flex-direction: column;
  min-height: 0;
  background: #fff;
  border: solid #8a8a8a;
  border-width: 2px 1px 1px;
}
.panel:last-child { border-bottom-color: #bbb; }
.ptools { display: flex; align-items: center; height: 27px; padding-left: 1px; background: #a9d02f; border-bottom: 1px solid #93ab52; flex: none; }
.ptools button { width: 27px; height: 25px; display: grid; place-items: center; flex: none; }
.ptools svg { width: 18px; height: 17px; }
.ptools .caret { width: 12px; }
.caret::after { content: ""; border: 3px solid transparent; border-top-color: #111; border-bottom: 0; }
.ptools .marked { width: 31px; height: 32px; margin: 0 -2px; border: 2px solid #8b0a1e; background: #f8efb0; z-index: 1; position: relative; }
.share { margin-left: auto; display: flex; align-items: center; width: 147px; gap: 2px; }
.share .sep { margin: 0; }
.share label { flex: none; }
.share input { width: 58px; height: 19px; padding: 0 4px; border: 1px solid #cfd6bd; border-radius: 2px; background: #fff; text-align: right; }
.share span { margin: 0 1px; }
.share button { width: 27px; }
.share .calc { width: 13px; height: 18px; }
.dim { width: 150px; gap: 1px; color: #e3ebcd; text-shadow: 0 0 1px #74892f; }
.dim input { color: #888; text-shadow: none; }
.dim span { margin-left: 3px; }

table { table-layout: fixed; width: 362px; border-collapse: collapse; flex: none; }
.c-nr { width: 14px; }
.c-name { width: 117px; }
.c-a { width: 39px; }
.c-b { width: 38px; }
th, td { height: 17px; padding: 0 2px; text-align: right; font-weight: 400; white-space: nowrap; border-right: 1px solid #ececec; }
th { height: 16px; padding: 0 1px; }
th:nth-child(2), td:nth-child(2) { text-align: left; padding: 0 2px 0 1px; }
th:nth-child(1), td:nth-child(1) { color: #777; border-right: 0; }
td { border-bottom: 1px solid #f0f0f0; }
td > div { display: flex; align-items: center; justify-content: space-between; }
td .auto { width: 12px; height: 13px; }
tbody tr:nth-child(odd) td { background: #fffee0; }
tbody tr.cur td:first-child { background: #99cffb; }
.sums {
  display: grid;
  grid-template-columns: 14px 117px 39px 38px 39px 39px 38px 38px;
  height: 18px;
  margin-top: auto;
  line-height: 17px;
  color: #777;
  text-align: right;
  border-top: 1px solid #ececec;
  white-space: nowrap;
}
.sums span { padding-right: 1px; border-right: 1px solid #ececec; }
.sums span:first-child { background: #99cffb; }
.pointer { position: absolute; left: 220px; top: 29px; width: 2px; height: 41px; background: #8b0a1e; }
.note { position: absolute; left: 131px; top: 121px; font: 11px/14px "Liberation Sans", sans-serif; color: #9c1027; }

/* detail */
.detail { display: flex; flex-direction: column; min-height: 0; padding: 0 3px 3px 0; }
.tabs { display: flex; align-items: flex-end; height: 18px; padding: 0 0 1px 2px; }
.tabs button { height: 16px; padding: 0 4px; border: 1px solid #e2e2e2; border-left: 0; background: #f5f5f5; }
.tabs .on { height: 18px; background: #fff; }
.sheet { flex: 1; display: flex; flex-direction: column; margin: 1px 0 0 3px; border: solid #858585; border-width: 1px 1px 0 2px; border-right-color: #ddd; }
.paper { flex: 1; background: #fff; padding: 6px 0 5px 3px; display: flex; flex-direction: column; font: 8px/9px "Open Sans", sans-serif; }
.desc { padding-left: 8px; font: 9px/13px "Noto Sans", sans-serif; }
.side { padding: 20px 0 0 8px; line-height: 10px; }
.section { width: 240px; height: 52px; margin-bottom: 4px; overflow: visible; }
.marks { font: 8px "Open Sans", sans-serif; fill: #111; }
.legend { display: grid; grid-template-columns: 144px 1fr; }
.legend h2 { font-size: 8px; line-height: 9px; font-weight: 700; }
.legend ol { counter-reset: layer; }
.legend li { display: flex; white-space: nowrap; counter-increment: layer; }
.legend li::before { content: counter(layer) ":"; width: 11px; flex: none; }
.actions { display: flex; gap: 6px; margin-top: auto; padding-left: 2px; }
.below { height: 138px; display: flex; align-items: flex-end; background: #f3f3f3; }
.hscroll { width: 54%; height: 2px; margin: 0 0 7px 12px; background: #8c8c8c; }

/* results */
.results { display: flex; flex-direction: column; min-height: 0; font-family: "Liberation Sans", sans-serif; }
.results > select { width: 127px; margin: 1px 0 0 auto; font-family: Roboto, sans-serif; flex: none; }
.cards { display: flex; flex-direction: column; gap: 5px; padding: 2px 2px 23px; background: #7a7a7a; }
.card { position: relative; padding: 6px 9px 0 6px; background: #fff; color: #333a40; box-shadow: 0 1px 0 #b5b5b5; }
.card h3 { max-width: 110px; font-size: 13px; line-height: 15px; }
.card p { font-size: 10px; line-height: 11px; }
.c1 { padding-bottom: 11px; }
.c2 { padding-bottom: 11px; }
.c3 { padding-bottom: 3px; }
.c4 { padding-bottom: 12px; }
.c5 { padding-bottom: 10px; }
.dot { position: absolute; right: 10px; top: 8px; width: 14px; height: 14px; border: 1px solid #555; border-radius: 50%; }
.red { background: #ae2a26; border-color: #ae2a26; }
.green { background: #86b52a; border-color: #86b52a; }
.meter { display: grid; grid-template-columns: 12px 1fr; gap: 2px; margin: 5px 2px 0 5px; font-size: 7px; line-height: 12px; color: #222; }
.klass { margin-top: 4px; }
.cap { display: grid; place-items: center; background: #d6d6d6; writing-mode: vertical-rl; transform: rotate(180deg); white-space: nowrap; min-height: 0; font-size: 8px; contain: size; }
.cap b { font-size: 7px; }
.cap sub { font-size: 6px; }
.cap.small { font-size: 7px; }
.bars { box-shadow: 1px 1px 1px #999; }
.bars span { display: block; padding-left: 3px; white-space: nowrap; }
.bars span:last-child { line-height: 13px; }
.grey { background: #d6d6d6; }
.blue { background: #4a83b8; }
.grad { background: linear-gradient(90deg, #5c9e27, #a5c82e 25%, #f9dc3a 50%, #e48a30 75%, #b02a25); }
.part { background: linear-gradient(90deg, #5c9e27, #a5c82e 28%, #f9dc3a 57%, #e48a30 85%, #cf5f2c); }
.rating { display: flex; flex-direction: column; align-items: center; height: 100px; background: #ae2a26; color: #fff; box-shadow: 1px 1px 1px #999; }
.rating strong { font: 92px/92px "Liberation Sans", sans-serif; height: 86px; padding-top: 4px; }
.rating em { align-self: flex-end; padding-right: 12px; font: 10px/12px "Liberation Sans", sans-serif; }
.eh { display: grid; grid-template-columns: 28px 11px 11px 11px 1fr; gap: 1px; height: 13px; padding-right: 2px; box-shadow: 1px 1px 1px #999; }
.eh b { background: #ae2a26; color: #fff; text-align: right; line-height: 13px; overflow: hidden; }
```
